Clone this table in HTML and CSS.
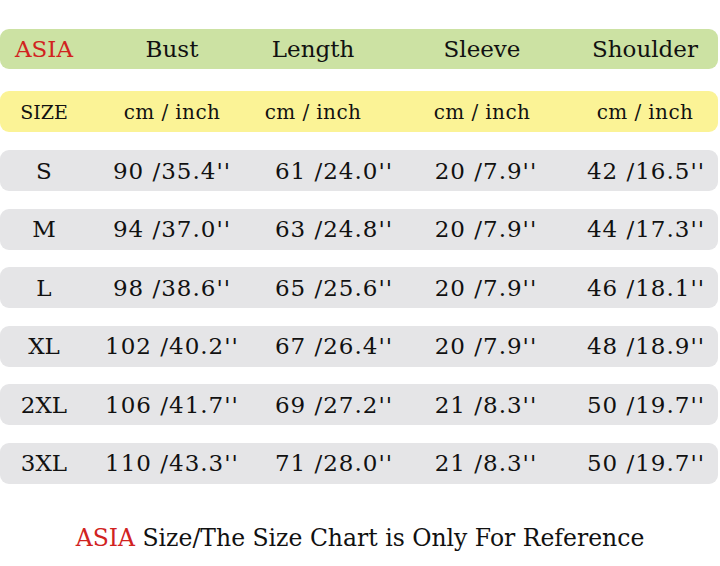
FILE: index.html
```html
<!DOCTYPE html>
<html>
<head>
<meta charset="utf-8">
<link rel="stylesheet" href="styles.css">
</head>
<body>
<div class="chart">
  <div class="row head">
    <div class="cell c1 red">ASIA</div>
    <div class="cell c2">Bust</div>
    <div class="cell c3h">Length</div>
    <div class="cell c4">Sleeve</div>
    <div class="cell c5">Shoulder</div>
  </div>
  <div class="row units">
    <div class="cell c1 size">SIZE</div>
    <div class="cell c2">cm / inch</div>
    <div class="cell c3h">cm / inch</div>
    <div class="cell c4">cm / inch</div>
    <div class="cell c5">cm / inch</div>
  </div>
  <div class="rows">
    <div class="row data"><div class="cell c1">S</div><div class="cell c2">90 /35.4''</div><div class="cell c3">61 /24.0''</div><div class="cell c4">20 /7.9''</div><div class="cell c5">42 /16.5''</div></div>
    <div class="row data"><div class="cell c1">M</div><div class="cell c2">94 /37.0''</div><div class="cell c3">63 /24.8''</div><div class="cell c4">20 /7.9''</div><div class="cell c5">44 /17.3''</div></div>
    <div class="row data"><div class="cell c1">L</div><div class="cell c2">98 /38.6''</div><div class="cell c3">65 /25.6''</div><div class="cell c4">20 /7.9''</div><div class="cell c5">46 /18.1''</div></div>
    <div class="row data"><div class="cell c1">XL</div><div class="cell c2">102 /40.2''</div><div class="cell c3">67 /26.4''</div><div class="cell c4">20 /7.9''</div><div class="cell c5">48 /18.9''</div></div>
    <div class="row data"><div class="cell c1">2XL</div><div class="cell c2">106 /41.7''</div><div class="cell c3">69 /27.2''</div><div class="cell c4">21 /8.3''</div><div class="cell c5">50 /19.7''</div></div>
    <div class="row data"><div class="cell c1">3XL</div><div class="cell c2">110 /43.3''</div><div class="cell c3">71 /28.0''</div><div class="cell c4">21 /8.3''</div><div class="cell c5">50 /19.7''</div></div>
  </div>
  <p class="note"><span class="red">ASIA</span> Size/The Size Chart is Only For Reference</p>
</div>
</body>
</html>
```
FILE: styles.css
```css
html, body {
  margin: 0;
  padding: 0;
  background: #ffffff;
}
body {
  width: 720px;
  height: 566px;
  overflow: hidden;
  font-family: "DejaVu Serif", "Liberation Serif", serif;
  color: #111111;
}
.chart {
  padding-top: 29px;
}
.row {
  display: grid;
  grid-template-columns: 88px 168px 144px 164px 156px;
  align-items: center;
  margin: 0 2px 0 0;
  border-radius: 9px;
}
.cell {
  text-align: center;
  white-space: nowrap;
}
.head {
  height: 40px;
  background: #cce2a3;
  font-size: 23px;
}
.units {
  height: 41px;
  margin-top: 22px;
  background: #fbf396;
  font-size: 20px;
  letter-spacing: 0.4px;
}
.units .size {
  font-size: 19px;
  letter-spacing: 0;
}
.rows {
  display: flex;
  flex-direction: column;
  gap: 17.6px;
  margin-top: 18px;
}
.data {
  height: 41px;
  background: #e5e5e7;
  font-size: 23px;
  letter-spacing: 1px;
}
.data .c1 { letter-spacing: 0; }
.c3h { padding-right: 30px; }
.c3 { padding-left: 12px; }
.c5 { padding-left: 6px; }
.data .c4 { padding-left: 8px; }
.data .c5 { padding-left: 8px; }
.red { color: #d1231f; }
.note {
  margin: 40px 0 0 0;
  text-align: center;
  font-size: 23.5px;
}
```
